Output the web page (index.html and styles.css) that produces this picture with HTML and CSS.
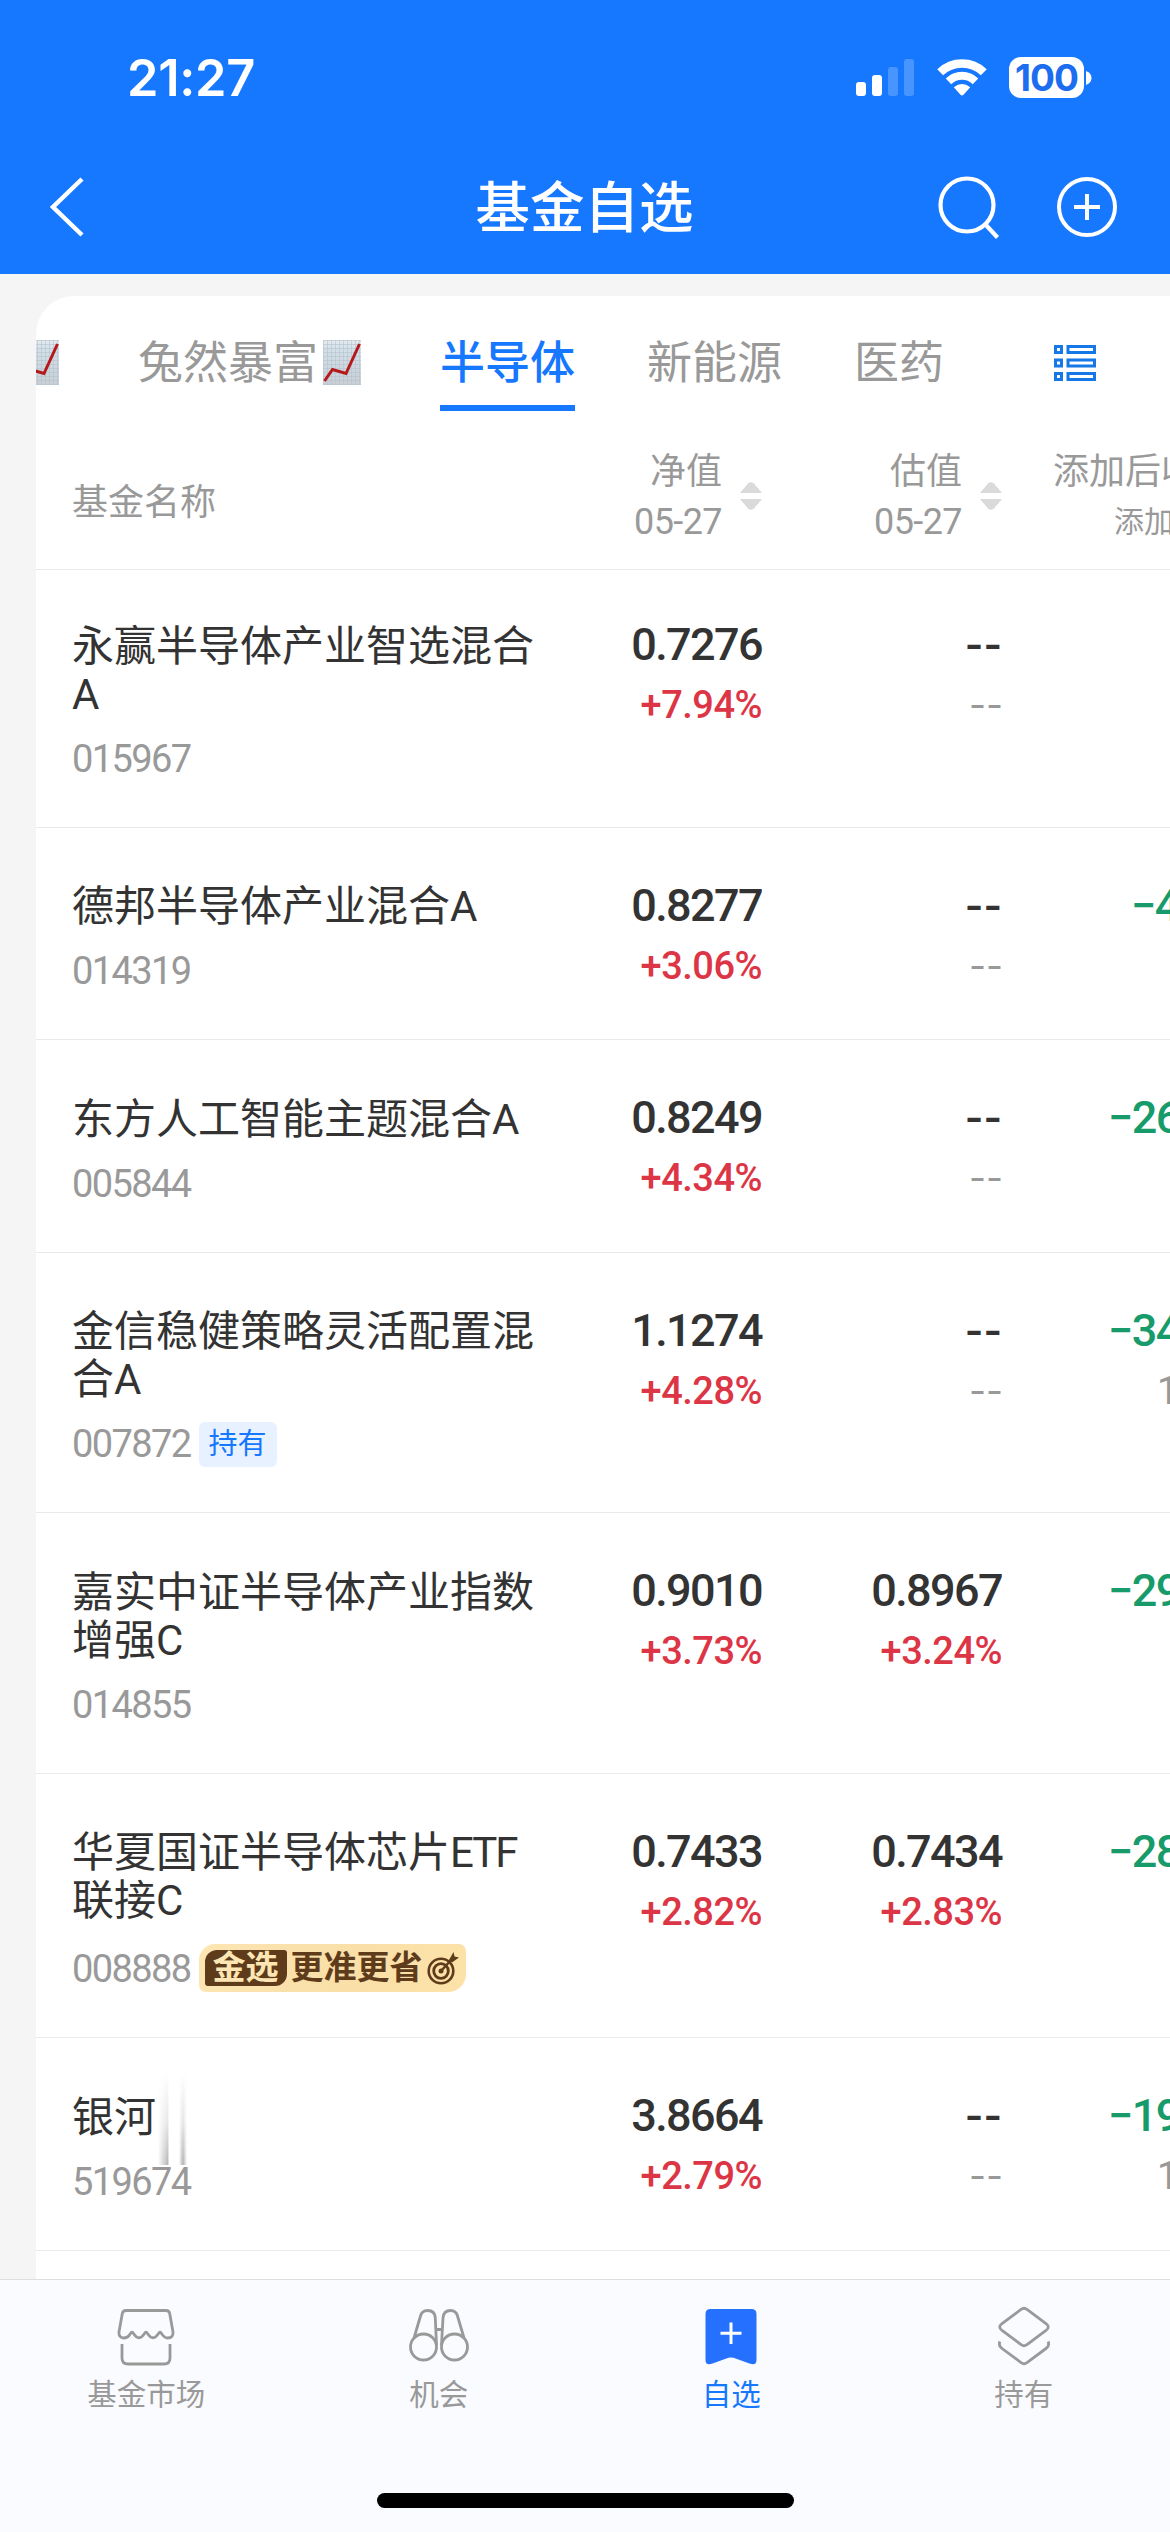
FILE: index.html
```html
<!DOCTYPE html>
<html lang="zh-CN">
<head>
<meta charset="utf-8">
<title>基金自选</title>
<link rel="stylesheet" href="styles.css">
</head>
<body>
<svg class="defs" width="0" height="0" aria-hidden="true">
  <defs>
    <linearGradient id="paper" x1="0" y1="0" x2="0" y2="1">
      <stop offset="0" stop-color="#e6ebef"/><stop offset=".2" stop-color="#d3e0e9"/><stop offset="1" stop-color="#c9ced4"/>
    </linearGradient>
    <pattern id="grid" width="4" height="4" patternUnits="userSpaceOnUse">
      <path d="M0 .5H4M.5 0V4" stroke="#b4c2cc" stroke-width=".6" fill="none"/>
    </pattern>
  </defs>
  <symbol id="chart" viewBox="0 0 38 45">
    <rect width="38" height="45" fill="url(#paper)"/>
    <rect width="38" height="45" fill="url(#grid)"/>
    <path d="M1.5 41L9.500 29.500L23 33.500L36.500 4" fill="none" stroke="#b5191c" stroke-width="3"/>
  </symbol>
  <symbol id="sort" viewBox="0 0 22 28">
    <path d="M8 1.500Q11-1 14 1.500L22 11H0ZM0 17H22L14 26.500Q11 29 8 26.500Z" fill="#dadada"/>
  </symbol>
</svg>
<div class="screen">
  <header class="top">
    <div class="status">
      <span class="time">21:27</span>
      <div class="status-icons">
        <svg width="58" height="37" viewBox="0 0 58 37"><g fill="#fff"><rect y="23" width="10" height="14" rx="3"/><rect x="16" y="16" width="10" height="21" rx="3"/></g><g fill="#fff" opacity=".22"><rect x="32" y="8" width="10" height="29" rx="3"/><rect x="48" width="10" height="37" rx="3"/></g></svg>
        <svg class="wifi" width="50" height="37" viewBox="0 0 50 37"><g fill="none" stroke="#fff"><path d="M3.200 13.200A31.500 31.500 0 0 1 46.800 13.200" stroke-width="8.500"/><path d="M11.500 22.300A19.500 19.500 0 0 1 38.500 22.300" stroke-width="8"/></g><path d="M16.800 28.300Q25 21.500 33.200 28.300L26.500 35.700Q25 37.300 23.500 35.700Z" fill="#fff"/></svg>
        <span class="battery">100</span>
        <svg class="tip" width="6" height="14" viewBox="0 0 6 14"><path d="M0 0Q5.500 2 5.500 7T0 14Z" fill="#fff"/></svg>
      </div>
    </div>
    <div class="nav">
      <svg class="back" width="36" height="60" viewBox="0 0 36 60"><path d="M33 2L4 30L33 58" fill="none" stroke="#fff" stroke-width="4.500"/></svg>
      <h1>基金自选</h1>
      <div class="nav-actions">
        <svg width="64" height="66" viewBox="0 0 64 66" fill="none" stroke="#fff" stroke-width="4.200"><circle cx="30" cy="31" r="26.500"/><path d="M48 50L60.500 63.500"/></svg>
        <svg width="62" height="62" viewBox="0 0 62 62" fill="none" stroke="#fff" stroke-width="4"><circle cx="31" cy="31" r="28"/><path d="M31 18V44M18 31H44"/></svg>
      </div>
    </div>
  </header>

  <main class="card">
    <nav class="tabs">
      <span class="tab tab-cut"><svg class="emoji"><use href="#chart"/></svg></span>
      <span class="tab">兔然暴富<svg class="emoji"><use href="#chart"/></svg></span>
      <span class="tab active">半导体</span>
      <span class="tab">新能源</span>
      <span class="tab">医药</span>
      <svg class="list-icon" width="42" height="36" viewBox="0 0 42 36" fill="none" stroke="#1677e6" stroke-width="3"><rect x="1.500" y="1.500" width="6" height="6"/><rect x="14" y="1.500" width="26.500" height="6"/><rect x="1.500" y="15" width="6" height="6"/><rect x="14" y="15" width="26.500" height="6"/><rect x="1.500" y="28.500" width="6" height="6"/><rect x="14" y="28.500" width="26.500" height="6"/></svg>
    </nav>

    <div class="row head">
      <div class="title">基金名称</div>
      <div class="sortable"><div class="label">净值<span class="date">05-27</span></div><svg width="22" height="28"><use href="#sort"/></svg></div>
      <div class="sortable"><div class="label">估值<span class="date">05-27</span></div><svg width="22" height="28"><use href="#sort"/></svg></div>
      <div class="gain-head">添加后收<span class="since">添加</span></div>
    </div>

    <div class="row first">
      <div class="fund"><div class="name">永赢半导体产业智选混合A</div><div class="code">015967</div></div>
      <div class="num"><b>0.7276</b><i class="up">+7.94%</i></div>
      <div class="num none"><b>--</b><i>--</i></div>
      <div></div>
    </div>
    <div class="row">
      <div class="fund"><div class="name">德邦半导体产业混合A</div><div class="code">014319</div></div>
      <div class="num"><b>0.8277</b><i class="up">+3.06%</i></div>
      <div class="num none"><b>--</b><i>--</i></div>
      <div class="gain short"><b>−4</b></div>
    </div>
    <div class="row">
      <div class="fund"><div class="name">东方人工智能主题混合A</div><div class="code">005844</div></div>
      <div class="num"><b>0.8249</b><i class="up">+4.34%</i></div>
      <div class="num none"><b>--</b><i>--</i></div>
      <div class="gain"><b>−26</b></div>
    </div>
    <div class="row">
      <div class="fund"><div class="name">金信稳健策略灵活配置混合A</div><div class="code">007872<span class="held">持有</span></div></div>
      <div class="num"><b>1.1274</b><i class="up">+4.28%</i></div>
      <div class="num none"><b>--</b><i>--</i></div>
      <div class="gain"><b>−34</b><i>1</i></div>
    </div>
    <div class="row">
      <div class="fund"><div class="name">嘉实中证半导体产业指数增强C</div><div class="code">014855</div></div>
      <div class="num"><b>0.9010</b><i class="up">+3.73%</i></div>
      <div class="num"><b>0.8967</b><i class="up">+3.24%</i></div>
      <div class="gain"><b>−29</b></div>
    </div>
    <div class="row promoted">
      <div class="fund"><div class="name">华夏国证半导体芯片<span class="latin">ETF</span>联接C</div><div class="code">008888<span class="gold"><em>金选</em>更准更省<svg width="33" height="34" viewBox="0 0 33 34" fill="none" stroke="#5e3c1b"><circle cx="14" cy="20" r="12.300" stroke-width="2.600"/><circle cx="14" cy="20" r="7.300" stroke-width="2.800"/><circle cx="14" cy="20" r="2.500" fill="#5e3c1b" stroke="none"/><path d="M14 20L25 8" stroke-width="2.500"/><path d="M22 9L26.500 1L27.500 5.500L32 6.500L25 11.500Z" fill="#5e3c1b" stroke="none"/></svg></span></div></div>
      <div class="num"><b>0.7433</b><i class="up">+2.82%</i></div>
      <div class="num"><b>0.7434</b><i class="up">+2.83%</i></div>
      <div class="gain"><b>−28</b></div>
    </div>
    <div class="row">
      <div class="fund"><div class="name">银河<span class="smear"></span></div><div class="code">519674</div></div>
      <div class="num"><b>3.8664</b><i class="up">+2.79%</i></div>
      <div class="num none"><b>--</b><i>--</i></div>
      <div class="gain"><b>−19</b><i>1</i></div>
    </div>
  </main>

  <footer class="tabbar">
    <div class="items">
      <div class="item"><svg width="64" height="64" viewBox="0 0 64 64" fill="none" stroke="#999" stroke-width="2.800"><path d="M12 5.500H52Q55 5.500 55.700 8.500L59 27Q59.500 33 53.500 33Q50.500 33 47.500 28.500Q46 26 44.500 28.500Q39 37 33.500 28.500Q32 26 30.500 28.500Q25 37 19.500 28.500Q18 26 16.500 28.500Q14 33 9.500 33Q4.500 32.500 5 27L8.300 8.500Q9 5.500 12 5.500Z"/><path d="M8 39V53Q8 59 14 59H50Q56 59 56 53V39"/></svg>基金市场</div>
      <div class="item"><svg width="64" height="64" viewBox="0 0 64 64" fill="none" stroke="#999" stroke-width="2.800"><circle cx="16.500" cy="42" r="13"/><circle cx="47.500" cy="42" r="13"/><path d="M7 33L13.500 11Q15 5.500 20.500 5.500Q28 5.500 28.300 13L29.500 40M57 33L50.500 11Q49 5.500 43.500 5.500Q36.500 5.500 36 13L34.500 40M28.500 24.500H35.500"/></svg>机会</div>
      <div class="item on"><svg width="64" height="64" viewBox="0 0 64 64"><path d="M11.500 4H52.500Q57.500 4 57.500 9V55Q57.500 61 50.500 58.500L34.500 52.800Q32 52 29.500 52.800L13.500 58.500Q6.500 61 6.500 55V9Q6.500 4 11.500 4Z" fill="#2670ff"/><path d="M32 17.500V39M21.500 28.200H42.500" stroke="#fff" stroke-width="3"/></svg>自选</div>
      <div class="item"><svg width="64" height="64" viewBox="0 0 64 64" fill="none" stroke="#999" stroke-width="2.800"><path d="M29 4.500Q32 2 35 4.500L54 18.500Q58.500 22 54 25.500L35 39.500Q32 42 29 39.500L10 25.500Q5.500 22 10 18.500Z"/><path d="M8 36.500Q6 40.500 10 43.500L29 57.500Q32 60 35 57.500L54 43.500Q58 40.500 56 36.500"/></svg>持有</div>
    </div>
    <div class="home"></div>
  </footer>
</div>
</body>
</html>
```

FILE: styles.css
```css
* { box-sizing: border-box; }
body { margin: 0; background: #f5f5f5; }
.defs { display: block; }
.screen {
  width: 1170px; height: 2532px; overflow: hidden;
  display: flex; flex-direction: column;
  background: #f5f5f5; color: #333;
  font-family: Roboto, "Noto Sans CJK SC", sans-serif;
}
svg { flex: none; display: block; }

/* header */
.top { height: 274px; flex: none; background: #1677ff; color: #fff; }
.status {
  height: 155px; padding: 0 78px 0 127px;
  display: flex; align-items: center; justify-content: space-between;
}
.time { font: 600 50.500px/60px Inter, sans-serif; letter-spacing: -.3px; }
.status-icons { display: flex; align-items: center; }
.wifi { margin: 0 22px 0 23px; }
.battery {
  width: 75px; height: 41px; border-radius: 12px;
  background: #fff; color: #1c6df0; text-align: center;
  font: 700 37px/41px Inter, sans-serif; letter-spacing: -1px;
}
.tip { margin-left: 2px; }
.nav {
  height: 104px; padding: 0 52px 0 49px;
  display: grid; grid-template-columns: 1fr auto 1fr; align-items: center;
}
.nav h1 { margin: 1px 0 0 2px; font-size: 54.500px; line-height: 80px; font-weight: 500; }
.nav-actions { display: flex; justify-content: flex-end; align-items: center; gap: 55px; }

/* card */
.card {
  flex: 1; min-height: 0; margin: 22px 0 0 36px; overflow: hidden;
  background: #fff; border-top-left-radius: 38px;
}
.tabs {
  height: 136px; padding-top: 32px;
  display: flex; align-items: flex-start; gap: 72px;
  font-size: 45px; line-height: 68px; color: #999; white-space: nowrap;
}
.tab { display: flex; align-items: center; height: 83px; padding-bottom: 11px; }
.tab-cut { margin-left: -20px; }
.emoji { width: 38px; height: 45px; margin: -3px 7px 0 5px; }
.active { color: #1677ff; font-weight: 500; border-bottom: 6px solid #1677ff; padding-bottom: 5px; }
.list-icon { margin: 17px 0 0 38px; }

.row {
  display: grid; grid-template-columns: 466px 224px 240px 168px;
  padding: 53.5px 0 44px 36px;
  border-bottom: 1px solid #e9e9e9;
}
.first { padding-top: 50.5px; }
.promoted { padding-bottom: 40px; }
.head { height: 138px; padding: 0 0 0 36px; align-items: center; color: #999; font-size: 36px; line-height: 50px; }
.title { padding-top: 5px; }
.sortable { display: flex; align-items: center; justify-content: flex-end; gap: 18px; margin-top: -7px; }
.sortable svg { margin-top: -2px; }
.label { text-align: right; }
.date { display: block; letter-spacing: -.6px; }
.gain-head { margin-top: -7px; padding-left: 51px; white-space: nowrap; }
.since { display: block; padding-left: 61px; font-size: 30px; }

.fund { padding-top: 2px; }
.name { font-size: 42px; line-height: 48px; }
.latin { letter-spacing: -2px; }
.code {
  display: flex; align-items: center; height: 48px; margin-top: 16px;
  color: #999; font-size: 38px; letter-spacing: -1.6px;
}
.promoted .code { height: 56px; }
.num { text-align: right; }
.num b, .gain b { display: block; font-size: 45px; line-height: 61px; font-weight: 500; letter-spacing: -1.6px; }
.num i, .gain i { display: block; font-style: normal; font-size: 38px; line-height: 60px; color: #999; letter-spacing: -.5px; }
.num, .gain { margin-top: -6.500px; height: 118px; }
.num .up { color: #dc3545; font-weight: 500; }
.none { font-family: Inter, sans-serif; }
.none b { font-size: 40px; font-weight: 600; letter-spacing: 0; }
.none i { letter-spacing: 0; font-size: 37px; position: relative; left: 1px; }
.gain { padding-left: 106px; white-space: nowrap; }
.gain b { color: #179b6b; }
.gain i { padding-left: 49px; }
.gain.short { padding-left: 129px; }

.held {
  margin-left: 8px; height: 45px; padding: 0 10px; border-radius: 6px;
  background: #e8f1ff; color: #1677ff; font-size: 29px; line-height: 44px; letter-spacing: 0;
}
.gold {
  margin: -2px 0 0 8px; width: 267px; height: 48px; padding: 0 6px;
  display: flex; align-items: center;
  border-radius: 16px 7px 18px 7px;
  background: linear-gradient(100deg, #fde6b3, #f9dfa8 50%, #fde2a8);
  color: #5e3c1b; font-size: 33px; line-height: 44px; font-weight: 700; letter-spacing: 0; white-space: nowrap;
}
.gold em {
  width: 83px; height: 36px; margin-right: 4px; text-align: center;
  border-radius: 12px 3px 12px 3px; background: #5e3c1b; color: #fde6b3;
  font-style: normal; line-height: 35px;
}
.gold svg { margin-left: 4px; }

/* soft vertical shadow beside the shortened name */
.smear {
  display: inline-block; vertical-align: top; width: 30px; height: 92px; margin: -21px 0 -60px 2px;
  background:
    linear-gradient(to right, transparent, #b5b5b5 90%, transparent) 0 0 / 11px 100% no-repeat,
    linear-gradient(to right, transparent, #b0b0b0 50%, transparent) 21px 0 / 8px 100% no-repeat;
  -webkit-mask-image: linear-gradient(transparent, rgba(0,0,0,.35) 55%, #000);
  mask-image: linear-gradient(transparent, rgba(0,0,0,.35) 55%, #000);
}

/* bottom bar */
.tabbar { height: 253px; flex: none; background: #f9fbff; border-top: 1.5px solid #dedfe2; }
.items { display: grid; grid-template-columns: repeat(4, 1fr); height: 213px; padding-top: 25px; }
.item {
  display: flex; flex-direction: column; align-items: center;
  color: #999; font-size: 29.500px; line-height: 44px; gap: 4px;
}
.on { color: #1677ff; }
.home { width: 417px; height: 15px; margin: 0 auto; border-radius: 8px; background: #000; }
```
